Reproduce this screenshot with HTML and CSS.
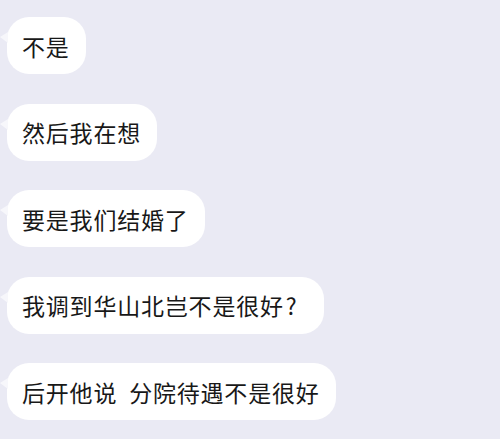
FILE: index.html
```html
<!DOCTYPE html>
<html lang="zh-CN">
<head>
<meta charset="utf-8">
<link rel="stylesheet" href="styles.css">
</head>
<body>
<div class="chat">
  <div class="bubble">不是</div>
  <div class="bubble">然后我在想</div>
  <div class="bubble">要是我们结婚了</div>
  <div class="bubble">我调到华山北岂不是很好<span class="punct">?</span></div>
  <div class="bubble">后开他说<span class="space"> </span>分院待遇不是很好</div>
</div>
</body>
</html>
```
FILE: styles.css
```css
html, body {
  margin: 0;
  padding: 0;
  background: #eaeaf4;
}
body {
  width: 500px;
  height: 439px;
  overflow: hidden;
}
.chat {
  display: flex;
  flex-direction: column;
  align-items: flex-start;
  gap: 29.5px;
  padding: 17px 0 0 7px;
}
.bubble {
  position: relative;
  display: flex;
  align-items: center;
  height: 57px;
  box-sizing: border-box;
  padding: 0 16px 0 15px;
  background: #ffffff;
  border-radius: 22px;
  font-family: "Noto Sans CJK SC", "Noto Sans", sans-serif;
  font-size: 23px;
  letter-spacing: 0.8px;
  color: #181818;
  white-space: pre;
}
.punct {
  margin-left: 2px;
  margin-right: 10px;
}
.space {
  margin-right: 6px;
}
.bubble::before {
  content: "";
  position: absolute;
  left: -7px;
  top: 15px;
  width: 0;
  height: 0;
  border-top: 5px solid transparent;
  border-bottom: 6px solid transparent;
  border-right: 8px solid #f7f7fb;
}
```
